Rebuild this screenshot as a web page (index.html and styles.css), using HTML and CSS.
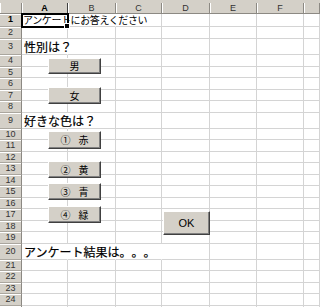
FILE: index.html
```html
<!DOCTYPE html>
<html lang="ja">
<head>
    <meta charset="UTF-8">
    <meta name="viewport" content="width=device-width, initial-scale=1.0">
    <title>アンケート</title>
    <link rel="stylesheet" href="styles.css">
</head>
<body>
    <div class="topbar"></div>
    <div class="sheet">
        <div class="row head">
            <div class="corner"></div>
            <div class="col-h current">A</div>
            <div class="col-h">B</div>
            <div class="col-h">C</div>
            <div class="col-h">D</div>
            <div class="col-h">E</div>
            <div class="col-h">F</div>
            <div class="col-h"></div>
        </div>

        <div class="row first">
            <div class="num current">1</div>
            <div class="cell text small-text open selected">アンケートにお答えください</div>
            <div class="cell open"></div>
            <div class="cell"></div><div class="cell"></div><div class="cell"></div><div class="cell"></div><div class="cell"></div>
        </div>
        <div class="row">
            <div class="num">2</div>
            <div class="cell"></div><div class="cell"></div><div class="cell"></div><div class="cell"></div><div class="cell"></div><div class="cell"></div><div class="cell"></div>
        </div>
        <div class="row tall">
            <div class="num">3</div>
            <div class="cell text open">性別は？</div>
            <div class="cell"></div><div class="cell"></div><div class="cell"></div><div class="cell"></div><div class="cell"></div><div class="cell"></div>
        </div>
        <div class="row">
            <div class="num">4</div>
            <div class="cell"></div><div class="cell"></div><div class="cell"></div><div class="cell"></div><div class="cell"></div><div class="cell"></div><div class="cell"></div>
        </div>
        <div class="row short">
            <div class="num">5</div>
            <div class="cell"></div><div class="cell"></div><div class="cell"></div><div class="cell"></div><div class="cell"></div><div class="cell"></div><div class="cell"></div>
        </div>
        <div class="row">
            <div class="num">6</div>
            <div class="cell"></div><div class="cell"></div><div class="cell"></div><div class="cell"></div><div class="cell"></div><div class="cell"></div><div class="cell"></div>
        </div>
        <div class="row short">
            <div class="num">7</div>
            <div class="cell"></div><div class="cell"></div><div class="cell"></div><div class="cell"></div><div class="cell"></div><div class="cell"></div><div class="cell"></div>
        </div>
        <div class="row">
            <div class="num">8</div>
            <div class="cell"></div><div class="cell"></div><div class="cell"></div><div class="cell"></div><div class="cell"></div><div class="cell"></div><div class="cell"></div>
        </div>
        <div class="row tall">
            <div class="num">9</div>
            <div class="cell text open">好きな色は？</div>
            <div class="cell"></div><div class="cell"></div><div class="cell"></div><div class="cell"></div><div class="cell"></div><div class="cell"></div>
        </div>
        <div class="row short">
            <div class="num">10</div>
            <div class="cell"></div><div class="cell"></div><div class="cell"></div><div class="cell"></div><div class="cell"></div><div class="cell"></div><div class="cell"></div>
        </div>
        <div class="row">
            <div class="num">11</div>
            <div class="cell"></div><div class="cell"></div><div class="cell"></div><div class="cell"></div><div class="cell"></div><div class="cell"></div><div class="cell"></div>
        </div>
        <div class="row short">
            <div class="num">12</div>
            <div class="cell"></div><div class="cell"></div><div class="cell"></div><div class="cell"></div><div class="cell"></div><div class="cell"></div><div class="cell"></div>
        </div>
        <div class="row">
            <div class="num">13</div>
            <div class="cell"></div><div class="cell"></div><div class="cell"></div><div class="cell"></div><div class="cell"></div><div class="cell"></div><div class="cell"></div>
        </div>
        <div class="row short">
            <div class="num">14</div>
            <div class="cell"></div><div class="cell"></div><div class="cell"></div><div class="cell"></div><div class="cell"></div><div class="cell"></div><div class="cell"></div>
        </div>
        <div class="row">
            <div class="num">15</div>
            <div class="cell"></div><div class="cell"></div><div class="cell"></div><div class="cell"></div><div class="cell"></div><div class="cell"></div><div class="cell"></div>
        </div>
        <div class="row short">
            <div class="num">16</div>
            <div class="cell"></div><div class="cell"></div><div class="cell"></div><div class="cell"></div><div class="cell"></div><div class="cell"></div><div class="cell"></div>
        </div>
        <div class="row">
            <div class="num">17</div>
            <div class="cell"></div><div class="cell"></div><div class="cell"></div><div class="cell"></div><div class="cell"></div><div class="cell"></div><div class="cell"></div>
        </div>
        <div class="row short">
            <div class="num">18</div>
            <div class="cell"></div><div class="cell"></div><div class="cell"></div><div class="cell"></div><div class="cell"></div><div class="cell"></div><div class="cell"></div>
        </div>
        <div class="row">
            <div class="num">19</div>
            <div class="cell"></div><div class="cell"></div><div class="cell"></div><div class="cell"></div><div class="cell"></div><div class="cell"></div><div class="cell"></div>
        </div>
        <div class="row tall">
            <div class="num">20</div>
            <div class="cell text open">アンケート結果は。。。</div>
            <div class="cell open"></div>
            <div class="cell open"></div>
            <div class="cell"></div><div class="cell"></div><div class="cell"></div><div class="cell"></div>
        </div>
        <div class="row short">
            <div class="num">21</div>
            <div class="cell"></div><div class="cell"></div><div class="cell"></div><div class="cell"></div><div class="cell"></div><div class="cell"></div><div class="cell"></div>
        </div>
        <div class="row">
            <div class="num">22</div>
            <div class="cell"></div><div class="cell"></div><div class="cell"></div><div class="cell"></div><div class="cell"></div><div class="cell"></div><div class="cell"></div>
        </div>
        <div class="row short">
            <div class="num">23</div>
            <div class="cell"></div><div class="cell"></div><div class="cell"></div><div class="cell"></div><div class="cell"></div><div class="cell"></div><div class="cell"></div>
        </div>
        <div class="row">
            <div class="num">24</div>
            <div class="cell"></div><div class="cell"></div><div class="cell"></div><div class="cell"></div><div class="cell"></div><div class="cell"></div><div class="cell"></div>
        </div>
        <div class="row">
            <div class="num"></div>
            <div class="cell"></div><div class="cell"></div><div class="cell"></div><div class="cell"></div><div class="cell"></div><div class="cell"></div><div class="cell"></div>
        </div>

        <!-- form buttons floating on the sheet -->
        <button class="btn b-male">男</button>
        <button class="btn b-female">女</button>
        <button class="btn b-red">① 赤</button>
        <button class="btn b-yellow">② 黄</button>
        <button class="btn b-blue">③ 青</button>
        <button class="btn b-green">④ 緑</button>
        <button class="btn b-ok">OK</button>
    </div>
</body>
</html>
```

FILE: styles.css
```css
body {
    margin: 0;
    width: 320px;
    height: 307px;
    overflow: hidden;
    background: #fff;
    font-family: "Noto Sans CJK JP", sans-serif;
}

.topbar {
    height: 3px;
    background: #d4d0c8;
}

.sheet {
    position: relative;
}

.row {
    display: grid;
    grid-template-columns: 22px 46px 48px 46px 48px 47px 47px 16px;
    height: 12px;
}

.row.short {
    height: 11px;
}

.row.first {
    height: 13px;
}

.row.tall {
    height: 16px;
}

.row.head {
    height: 11px;
}

.row > div {
    box-sizing: border-box;
    border-right: 1px solid #d4d4d4;
    border-bottom: 1px solid #d4d4d4;
}

.corner,
.col-h,
.num {
    background: #d4d0c8;
    color: #333;
    font-family: "Liberation Sans", Arial, sans-serif;
    font-size: 9px;
    text-align: center;
}

.row > .corner,
.row > .col-h {
    border-right-color: #8c8983;
    border-bottom-color: #8c8983;
    box-shadow: inset 1px 0 #fff;
    line-height: 10px;
}

.row > .num {
    border-right-color: #8c8983;
    border-bottom-color: #aaa69e;
    box-shadow: inset 0 1px #fff;
    line-height: 11px;
}

.row.short > .num {
    line-height: 10px;
}

.row.tall > .num {
    line-height: 15px;
}

.current {
    font-weight: bold;
    color: #000;
}

.row > .col-h.current {
    border-right-color: #404040;
}

.cell.text {
    padding-left: 2px;
    white-space: nowrap;
    font-size: 12px;
    line-height: 15px;
    color: #000;
    text-spacing-trim: space-all;
    -webkit-text-stroke: 0.2px #000;
}

.cell.small-text {
    padding-left: 1px;
    font-size: 10px;
    letter-spacing: -0.4px;
    line-height: 12px;
    -webkit-text-stroke: 0;
}

.row > .cell.open {
    border-right-color: transparent;
}

.cell.selected {
    position: relative;
    outline: 2px solid #000;
    outline-offset: -1px;
}

.cell.selected::after {
    content: "";
    position: absolute;
    right: -3px;
    bottom: -3px;
    width: 4px;
    height: 4px;
    background: #000;
    border: 1px solid #fff;
}

.btn {
    position: absolute;
    box-sizing: border-box;
    width: 53px;
    height: 17px;
    padding: 0;
    margin: 0;
    background: #d4d0c8;
    border: 1px solid;
    border-color: #fff #404040 #404040 #fff;
    box-shadow: inset -1px -1px #808080;
    color: #000;
    font-family: "Noto Sans CJK JP", sans-serif;
    font-size: 10px;
    line-height: 14px;
    word-spacing: 6px;
    text-align: center;
}

.b-male {
    left: 48px;
    top: 55px;
    height: 16px;
}

.b-female {
    left: 48px;
    top: 84px;
}

.b-red {
    left: 48px;
    top: 128px;
    height: 18px;
}

.b-yellow {
    left: 48px;
    top: 158px;
}

.b-blue {
    left: 48px;
    top: 180px;
}

.b-green {
    left: 48px;
    top: 203px;
}

.b-ok {
    left: 163px;
    top: 208px;
    width: 47px;
    height: 24px;
    font-family: "Liberation Sans", Arial, sans-serif;
    font-size: 11px;
}
```
